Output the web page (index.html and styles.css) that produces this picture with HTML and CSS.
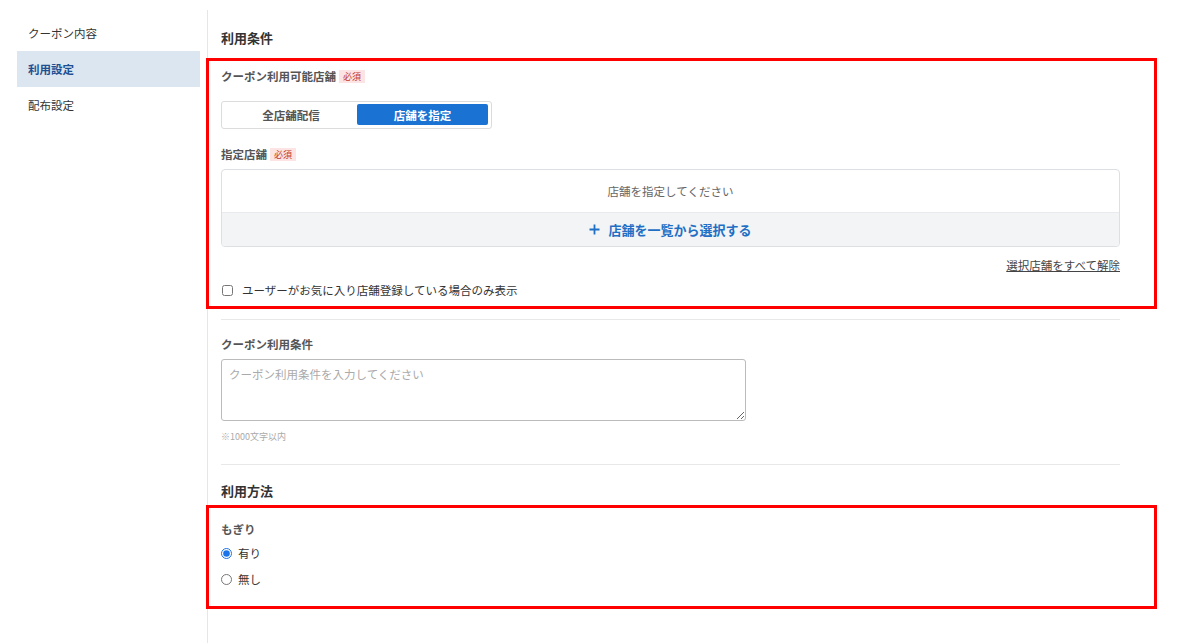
FILE: index.html
```html
<!DOCTYPE html>
<html lang="ja">
<head>
    <meta charset="UTF-8">
    <meta name="viewport" content="width=device-width, initial-scale=1.0">
    <title>利用設定</title>
    <link rel="stylesheet" href="styles.css">
</head>
<body>
    <div class="layout">
        <nav class="side-nav">
            <a class="nav-item" href="#">クーポン内容</a>
            <a class="nav-item active" href="#">利用設定</a>
            <a class="nav-item" href="#">配布設定</a>
        </nav>

        <main class="main">
            <div class="content">
                <h2 class="section-title">利用条件</h2>

                <!-- 店舗設定 -->
                <div class="highlight highlight-stores">
                    <p class="field-label">クーポン利用可能店舗<span class="badge">必須</span></p>
                    <div class="segment">
                        <button class="segment-btn">全店舗配信</button>
                        <button class="segment-btn selected">店舗を指定</button>
                    </div>

                    <p class="field-label label-stores">指定店舗<span class="badge">必須</span></p>
                    <div class="store-box">
                        <div class="store-empty">店舗を指定してください</div>
                        <button class="store-add">
                            <svg width="11" height="11" viewBox="0 0 11 11"><path d="M5.5 0.5v10M0.5 5.5h10" stroke="#1f6fc5" stroke-width="1.8" fill="none"/></svg>
                            店舗を一覧から選択する
                        </button>
                    </div>
                    <div class="clear-row"><a href="#" class="clear-link">選択店舗をすべて解除</a></div>
                    <label class="check-row">
                        <input type="checkbox" class="check">
                        ユーザーがお気に入り店舗登録している場合のみ表示
                    </label>
                </div>

                <hr class="divider divider-first">

                <p class="field-label label-terms">クーポン利用条件</p>
                <textarea class="terms-input" placeholder="クーポン利用条件を入力してください"></textarea>
                <p class="note">※1000文字以内</p>

                <hr class="divider divider-second">

                <h2 class="section-title title-method">利用方法</h2>

                <!-- もぎり -->
                <div class="highlight highlight-method">
                    <p class="field-label">もぎり</p>
                    <label class="radio-row">
                        <input type="radio" name="mogiri" class="radio" checked>
                        有り
                    </label>
                    <label class="radio-row radio-second">
                        <input type="radio" name="mogiri" class="radio">
                        無し
                    </label>
                </div>
            </div>
        </main>
    </div>
</body>
</html>
```

FILE: styles.css
```css
* {
    margin: 0;
    padding: 0;
    box-sizing: border-box;
    font-family: 'Noto Sans CJK JP', 'Noto Sans', sans-serif;
}

body {
    background-color: white;
    color: #333;
    font-size: 11.5px;
}

.layout {
    display: flex;
    align-items: flex-start;
    min-height: 643px;
}

.side-nav {
    display: flex;
    flex-direction: column;
    width: 200px;
    padding: 15px 0 0 17px;
    margin-right: 7px;
}

.nav-item {
    display: block;
    height: 36px;
    line-height: 36px;
    padding-left: 11px;
    color: #333;
    text-decoration: none;
    font-size: 11.5px;
}

.nav-item.active {
    background-color: #dce6f1;
    color: #1d4f91;
    font-weight: bold;
}

.main {
    margin-top: 10px;
    min-height: 633px;
    border-left: 1px solid #e6e6e6;
    padding: 18px 0 0 13px;
}

.content {
    width: 899px;
}

.section-title {
    font-size: 13px;
    line-height: 20px;
    font-weight: bold;
    color: #333;
}

.highlight {
    border: 3px solid #ff0000;
    margin: 10px -37px 0 -15px;
    padding: 6px 34px 7px 12px;
}

.field-label {
    display: flex;
    align-items: center;
    font-size: 11.5px;
    line-height: 18px;
    font-weight: bold;
    color: #555;
}

.badge {
    display: inline-block;
    margin-left: 3px;
    padding: 0 4px;
    font-size: 9px;
    line-height: 13px;
    font-weight: normal;
    color: #c0392b;
    background-color: #fde4e4;
}

.segment {
    display: grid;
    grid-template-columns: 132px 131px;
    width: 271px;
    margin-top: 16px;
    padding: 2px 3px 3px;
    border: 1px solid #dcdcdc;
    border-radius: 3px;
}

.segment-btn {
    height: 21px;
    border: none;
    border-radius: 2px;
    background: none;
    font-size: 11.5px;
    font-weight: bold;
    color: #555;
}

.segment-btn.selected {
    background-color: #1a73d2;
    color: white;
}

.label-stores {
    margin-top: 16px;
}

.store-box {
    margin-top: 6px;
    border: 1px solid #dcdfe3;
    border-radius: 4px;
    overflow: hidden;
}

.store-empty {
    height: 43px;
    line-height: 43px;
    text-align: center;
    color: #666;
    font-size: 11.5px;
    border-bottom: 1px solid #e8eaed;
}

.store-add {
    display: flex;
    align-items: center;
    justify-content: center;
    gap: 8px;
    width: 100%;
    height: 33px;
    border: none;
    background-color: #f3f4f6;
    color: #1f6fc5;
    font-size: 13px;
    font-weight: bold;
}

.clear-row {
    display: flex;
    justify-content: flex-end;
    margin-top: 9px;
    line-height: 18px;
}

.clear-link {
    color: #444;
    font-size: 11.5px;
}

.check-row {
    display: flex;
    align-items: center;
    gap: 9px;
    margin-top: 7px;
    line-height: 18px;
    color: #333;
    padding-left: 1px;
}

.check {
    width: 11px;
    height: 11px;
    margin: 0;
}

.divider {
    border: none;
    border-top: 1px solid #e8e8e8;
}

.divider-first {
    margin-top: 10px;
}

.label-terms {
    margin-top: 15px;
}

.terms-input {
    display: block;
    width: 525px;
    height: 62px;
    margin-top: 6px;
    padding: 6px 7px;
    border: 1px solid #bbb;
    border-radius: 3px;
    font-size: 11.5px;
    color: #333;
}

.terms-input::placeholder {
    color: #aaa;
}

.note {
    margin-top: 9px;
    font-size: 9px;
    line-height: 14px;
    color: #aaa;
}

.divider-second {
    margin-top: 20px;
}

.title-method {
    margin-top: 16px;
}

.highlight-method {
    margin-top: 4px;
    padding-top: 12px;
    padding-bottom: 17px;
}

.radio-row {
    display: flex;
    align-items: center;
    gap: 6px;
    margin-top: 5px;
    line-height: 20px;
    color: #333;
}

.radio-second {
    margin-top: 6px;
}

.radio {
    width: 11px;
    height: 11px;
    margin: 0;
    accent-color: #1a73e8;
}
```
